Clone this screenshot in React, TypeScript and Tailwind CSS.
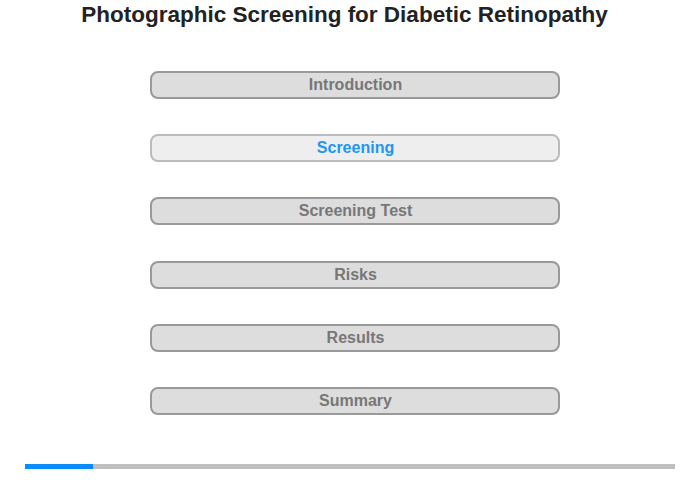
const items = ['Introduction', 'Screening', 'Screening Test', 'Risks', 'Results', 'Summary']
const active = 1

export default function App() {
  return (
    <div className="h-[480px] w-[700px] bg-white" style={{ fontFamily: '"Liberation Sans", Arial, sans-serif' }}>
      <h1 className="pr-[11px] pt-[2px] text-center text-[22.5px] font-bold leading-[26px] text-[#222]">
        Photographic Screening for Diabetic Retinopathy
      </h1>
      <div className="mt-[43px] flex flex-col items-center gap-[35.2px] pl-[9px]">
        {items.map((label, i) => (
          <div
            key={label}
            className={`flex h-[28px] w-[410px] items-center justify-center rounded-[8px] border-2 pl-[2px] text-[16px] font-bold ${
              i === active
                ? 'border-[#bbb] bg-[#eeeeee] text-[#2196f3]'
                : 'border-[#999] bg-[#dddddd] text-[#777]'
            }`}
          >
            {label}
          </div>
        ))}
      </div>
      <div className="mx-[25px] mt-[49px] flex h-[5px] bg-[#c0c0c0]">
        <div className="h-full w-[68px] bg-[#0a8cff]" />
      </div>
    </div>
  )
}
